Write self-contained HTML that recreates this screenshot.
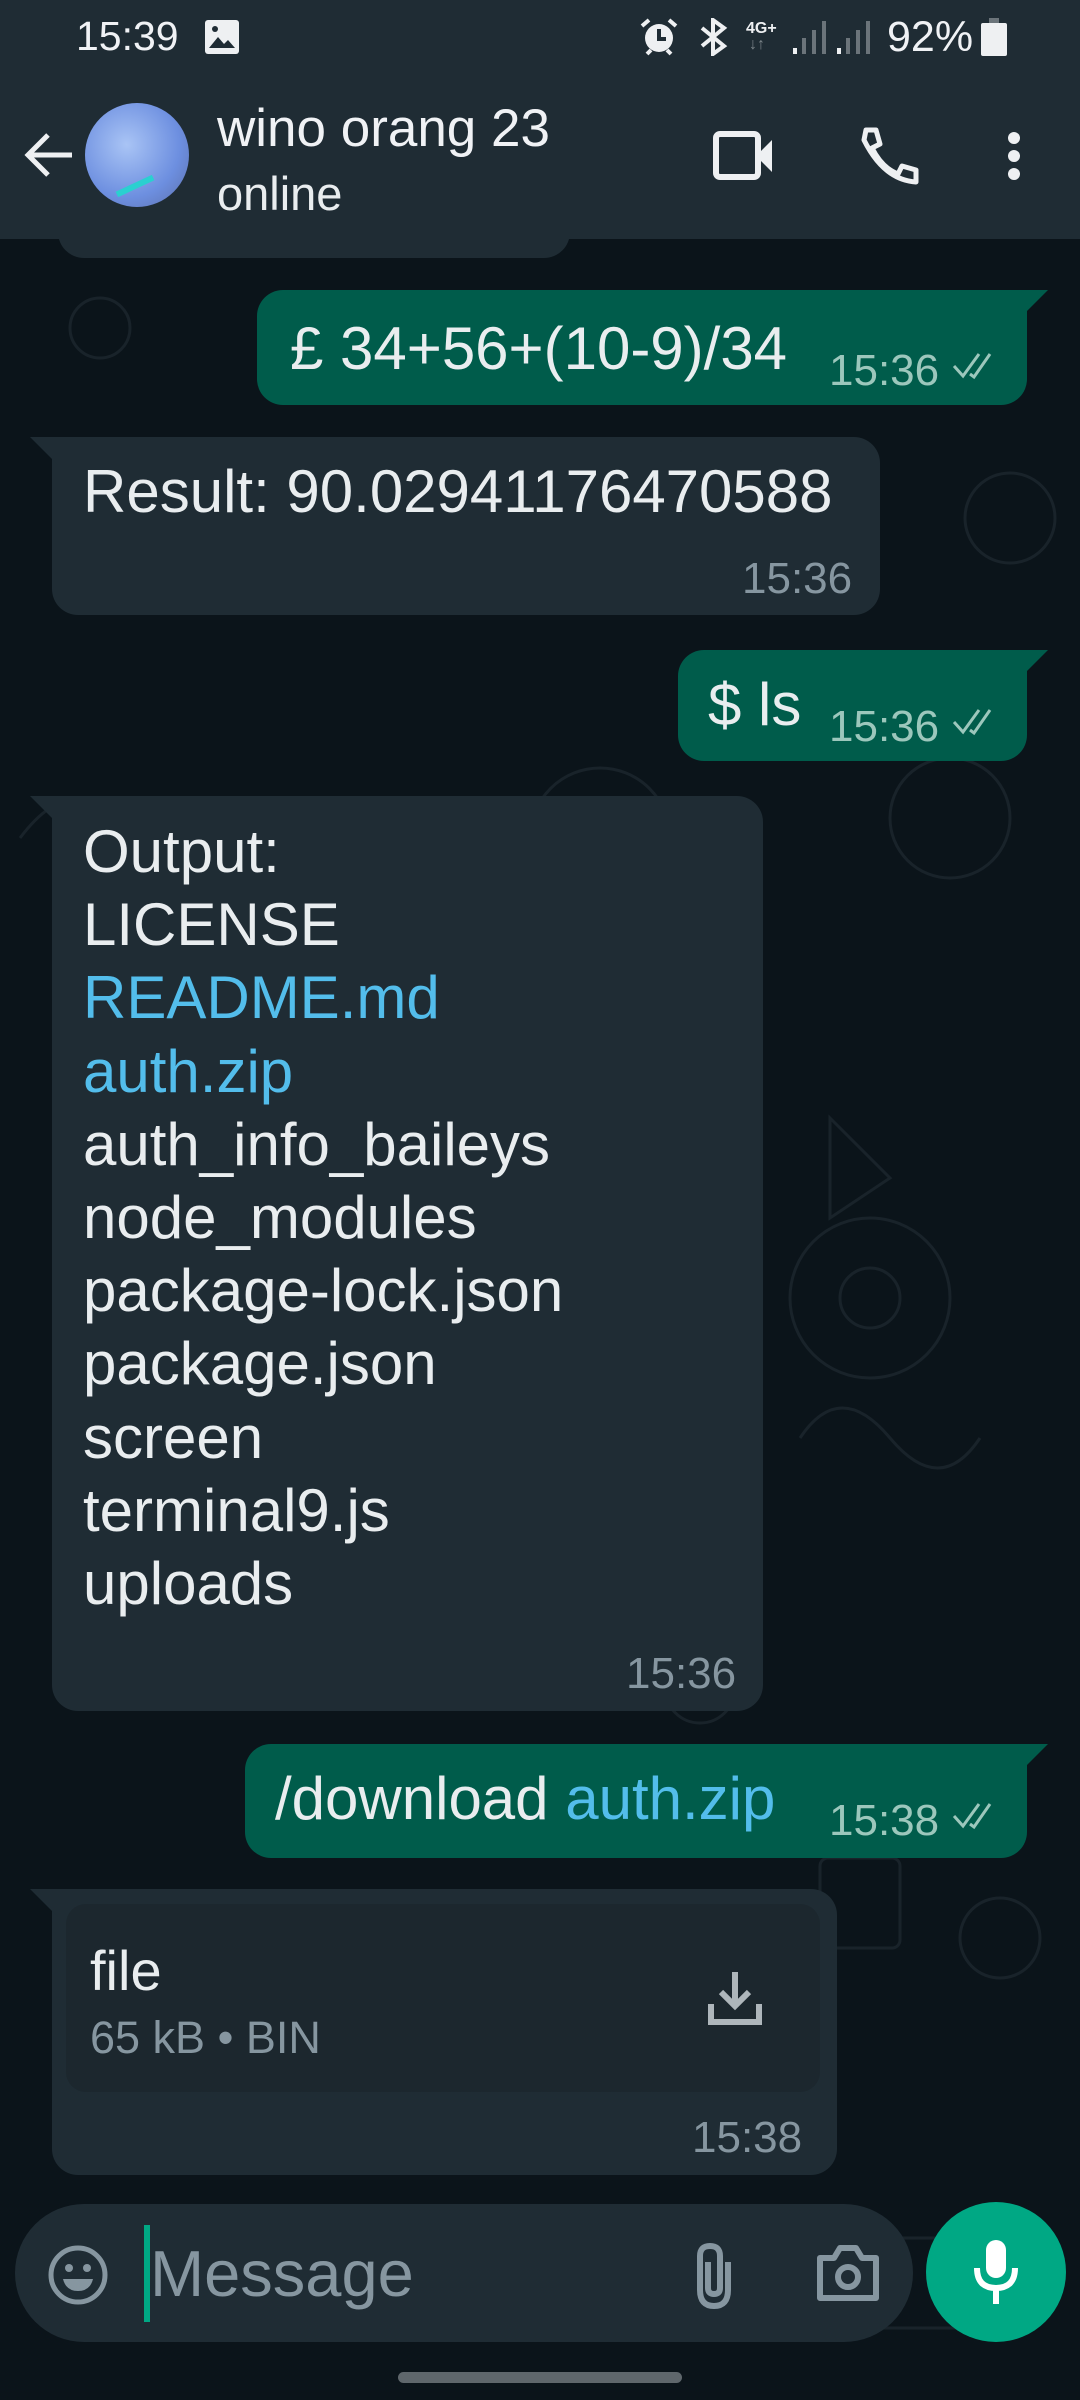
<!DOCTYPE html>
<html><head><meta charset="utf-8"><style>
*{margin:0;padding:0;box-sizing:border-box}
body{width:1080px;height:2400px;background:#0b141a;position:relative;overflow:hidden;font-family:"Liberation Sans",sans-serif;color:#e9edef}
.a{position:absolute}
.t{position:absolute;white-space:nowrap}
.in{background:#1f2c34;border-radius:26px}
.out{background:#005c4b;border-radius:26px}
.msg{font-size:60px;line-height:60px}
.tm{font-size:44px;color:#8696a0}
.tmo{font-size:44px;color:#9cc7bc}
.link{color:#53bdeb}
</style></head><body>
<svg class="a" style="left:0;top:238px" width="1080" height="2140" fill="none" stroke="#19232a" stroke-width="3">
<circle cx="100" cy="90" r="30"/><circle cx="950" cy="580" r="60"/><circle cx="870" cy="1060" r="80"/><circle cx="870" cy="1060" r="30"/>
<circle cx="1000" cy="1700" r="40"/><rect x="820" y="1620" width="80" height="90" rx="8"/><circle cx="600" cy="600" r="70"/>
<path d="M800 1200 q40 -60 90 0 t90 0"/><circle cx="1010" cy="280" r="45"/><path d="M830 880 l60 60 l-60 40z"/>
<rect x="820" y="2000" width="160" height="90" rx="12"/><circle cx="700" cy="1450" r="35"/><path d="M20 600 q60 -80 120 0"/>
</svg>
<div class="a" style="left:0;top:0;width:1080px;height:239px;background:#1f2c34"></div>
<div class="a in" style="left:58px;top:200px;width:512px;height:58px;border-radius:0 0 26px 26px"></div>
<div class="a" style="left:0;top:200px;width:1080px;height:39px;background:#1f2c34"></div>
<div class="t" style="left:76px;top:13px;font-size:41px;color:#f0f2f5">15:39</div>
<svg class="a" style="left:205px;top:20px" width="34" height="34"><rect x="0" y="0" width="34" height="34" rx="3" fill="#eef0f2"/><path d="M4 28 l9 -11 l6 7 l4 -4 l7 8z" fill="#1f2c34"/><circle cx="10" cy="9" r="3" fill="#1f2c34"/></svg>
<svg class="a" style="left:640px;top:18px" width="40" height="38"><circle cx="19" cy="20" r="14" fill="#eef0f2"/><path d="M19 11 v10 h7" stroke="#1f2c34" stroke-width="4" fill="none"/><path d="M2 8 l7 -6 M36 8 l-7 -6 M7 36 l4 -4 M31 36 l-4 -4" stroke="#eef0f2" stroke-width="4"/></svg>
<svg class="a" style="left:696px;top:18px" width="34" height="38"><path d="M6 10 l22 18 l-11 8 v-34 l11 8 l-22 18" stroke="#eef0f2" stroke-width="4" fill="none"/></svg>
<div class="a" style="left:746px;top:20px;font-size:16px;font-weight:bold;color:#eef0f2">4G+</div>
<div class="a" style="left:749px;top:36px;font-size:16px;font-weight:bold;color:#7a8388">↓↑</div>
<svg class="a" style="left:792px;top:20px" width="80" height="36"><g fill="#6b747a"><rect x="10" y="18" width="4" height="16"/><rect x="20" y="10" width="4" height="24"/><rect x="30" y="1" width="4" height="33"/><rect x="54" y="18" width="4" height="16"/><rect x="64" y="10" width="4" height="24"/><rect x="74" y="1" width="4" height="33"/></g><rect x="1" y="28" width="4" height="6" fill="#eef0f2"/><rect x="45" y="28" width="4" height="6" fill="#eef0f2"/></svg>
<div class="t" style="left:887px;top:13px;font-size:43px;color:#f0f2f5">92%</div>
<svg class="a" style="left:981px;top:18px" width="26" height="38"><rect x="8" y="0" width="10" height="5" fill="#6b747a"/><rect x="0" y="5" width="26" height="33" rx="2" fill="#eef0f2"/></svg>
<svg class="a" style="left:24px;top:132px" width="52" height="46"><path d="M48 23 H4 M24 3 L4 23 L24 43" stroke="#eef0f2" stroke-width="5" fill="none"/></svg>
<div class="a" style="left:85px;top:103px;width:104px;height:104px;border-radius:50%;background:radial-gradient(circle at 40% 40%,#a9c4f5,#6d8fe0 60%,#5b6ea8);overflow:hidden"><div class="a" style="left:30px;top:80px;width:40px;height:6px;background:#2ad0d0;transform:rotate(-25deg)"></div></div>
<div class="t" style="left:217px;top:98px;font-size:53px;color:#f0f2f5">wino orang 23</div>
<div class="t" style="left:217px;top:166px;font-size:47px;color:#e9edef">online</div>
<svg class="a" style="left:712px;top:130px" width="66" height="52"><rect x="4" y="4" width="42" height="43" rx="4" stroke="#eef0f2" stroke-width="6" fill="none"/><path d="M48 22 L60 10 V42 L48 30z" fill="#eef0f2"/></svg>
<svg class="a" style="left:858px;top:126px" width="62" height="60"><path d="M8 4 H18 L22 18 L14 22 Q24 42 40 48 L44 40 L58 44 V56 Q26 54 6 14 Z" stroke="#eef0f2" stroke-width="5" fill="none" stroke-linejoin="round"/></svg>
<svg class="a" style="left:1004px;top:130px" width="20" height="56" fill="#eef0f2"><circle cx="10" cy="8" r="6"/><circle cx="10" cy="26" r="6"/><circle cx="10" cy="44" r="6"/></svg>
<!-- out 1 -->
<div class="a out" style="left:257px;top:290px;width:770px;height:115px;border-top-right-radius:0"></div>
<svg class="a" style="left:1020px;top:290px" width="30" height="30"><path d="M0 0 H28 L0 28z" fill="#005c4b"/></svg>
<div class="t msg" style="left:290px;top:319px">£ 34+56+(10-9)/34</div>
<div class="t tmo" style="left:829px;top:346px">15:36</div>
<svg class="a" style="left:950px;top:350px" width="56" height="30"><path d="M4 16 l9 10 l16 -22 M20 24 l4 3 l16 -23" stroke="#9cc7bc" stroke-width="3" fill="none"/></svg>
<!-- in result -->
<div class="a in" style="left:52px;top:437px;width:828px;height:178px;border-top-left-radius:0"></div>
<svg class="a" style="left:30px;top:437px" width="30" height="30"><path d="M28 0 H0 L28 28z" fill="#1f2c34"/></svg>
<div class="t msg" style="left:83px;top:462px;color:#e9edef">Result: 90.02941176470588</div>
<div class="t tm" style="left:742px;top:554px">15:36</div>
<!-- out ls -->
<div class="a out" style="left:678px;top:650px;width:349px;height:111px;border-top-right-radius:0"></div>
<svg class="a" style="left:1020px;top:650px" width="30" height="30"><path d="M0 0 H28 L0 28z" fill="#005c4b"/></svg>
<div class="t msg" style="left:708px;top:675px">$ ls</div>
<div class="t tmo" style="left:829px;top:702px">15:36</div>
<svg class="a" style="left:950px;top:706px" width="56" height="30"><path d="M4 16 l9 10 l16 -22 M20 24 l4 3 l16 -23" stroke="#9cc7bc" stroke-width="3" fill="none"/></svg>
<!-- output -->
<div class="a in" style="left:52px;top:796px;width:711px;height:915px;border-top-left-radius:0"></div>
<svg class="a" style="left:30px;top:796px" width="30" height="30"><path d="M28 0 H0 L28 28z" fill="#1f2c34"/></svg>
<div class="t msg" style="left:83px;top:815px;line-height:73.2px">Output:<br>LICENSE<br><span class="link">README.md</span><br><span class="link">auth.zip</span><br>auth_info_baileys<br>node_modules<br>package-lock.json<br>package.json<br>screen<br>terminal9.js<br>uploads</div>
<div class="t tm" style="left:626px;top:1649px">15:36</div>
<!-- out download -->
<div class="a out" style="left:245px;top:1744px;width:782px;height:114px;border-top-right-radius:0"></div>
<svg class="a" style="left:1020px;top:1744px" width="30" height="30"><path d="M0 0 H28 L0 28z" fill="#005c4b"/></svg>
<div class="t msg" style="left:275px;top:1769px">/download <span class="link">auth.zip</span></div>
<div class="t tmo" style="left:829px;top:1796px">15:38</div>
<svg class="a" style="left:950px;top:1800px" width="56" height="30"><path d="M4 16 l9 10 l16 -22 M20 24 l4 3 l16 -23" stroke="#9cc7bc" stroke-width="3" fill="none"/></svg>
<!-- file -->
<div class="a in" style="left:52px;top:1889px;width:785px;height:286px;border-top-left-radius:0"></div>
<svg class="a" style="left:30px;top:1889px" width="30" height="30"><path d="M28 0 H0 L28 28z" fill="#1f2c34"/></svg>
<div class="a" style="left:66px;top:1904px;width:754px;height:188px;background:#1c272e;border-radius:20px"></div>
<div class="t" style="left:90px;top:1938px;font-size:56px">file</div>
<div class="t" style="left:90px;top:2012px;font-size:45px;color:#8696a0">65 kB • BIN</div>
<svg class="a" style="left:706px;top:1970px" width="58" height="58"><path d="M29 2 V36 M15 22 L29 36 L43 22 M5 34 V52 H53 V34" stroke="#aeb6bb" stroke-width="6" fill="none"/></svg>
<div class="t tm" style="left:692px;top:2113px">15:38</div>
<!-- input -->
<div class="a" style="left:15px;top:2204px;width:898px;height:138px;background:#1f2c34;border-radius:69px"></div>
<svg class="a" style="left:46px;top:2243px" width="64" height="64"><circle cx="32" cy="32" r="27" stroke="#8696a0" stroke-width="5" fill="none"/><circle cx="23" cy="25" r="4" fill="#8696a0"/><circle cx="41" cy="25" r="4" fill="#8696a0"/><path d="M17 36 H47 Q44 48 32 48 Q20 48 17 36z" fill="#8696a0"/></svg>
<div class="a" style="left:144px;top:2225px;width:6px;height:97px;background:#00a884"></div>
<div class="t" style="left:150px;top:2236px;font-size:65px;color:#8696a0">Message</div>
<svg class="a" style="left:692px;top:2240px" width="46" height="72"><path d="M36 22 V50 Q36 66 22 66 Q8 66 8 50 V16 Q8 6 18 6 Q28 6 28 16 V48 Q28 54 22 54 Q16 54 16 48 V22" stroke="#8696a0" stroke-width="6" fill="none"/></svg>
<svg class="a" style="left:816px;top:2242px" width="64" height="60"><path d="M4 16 H18 L24 6 H40 L46 16 H60 V56 H4z" stroke="#8696a0" stroke-width="6" fill="none" stroke-linejoin="round"/><circle cx="32" cy="35" r="10" stroke="#8696a0" stroke-width="6" fill="none"/></svg>
<div class="a" style="left:926px;top:2202px;width:140px;height:140px;border-radius:50%;background:#00a884"></div>
<svg class="a" style="left:972px;top:2238px" width="48" height="70"><rect x="14" y="2" width="20" height="38" rx="10" fill="#fff"/><path d="M5 30 Q5 50 24 50 Q43 50 43 30 M24 50 V66" stroke="#fff" stroke-width="6" fill="none"/></svg>
<div class="a" style="left:0;top:2345px;width:1080px;height:55px;background:#0b141a"></div>
<div class="a" style="left:398px;top:2372px;width:284px;height:11px;border-radius:6px;background:#5f676c"></div>
</body></html>
